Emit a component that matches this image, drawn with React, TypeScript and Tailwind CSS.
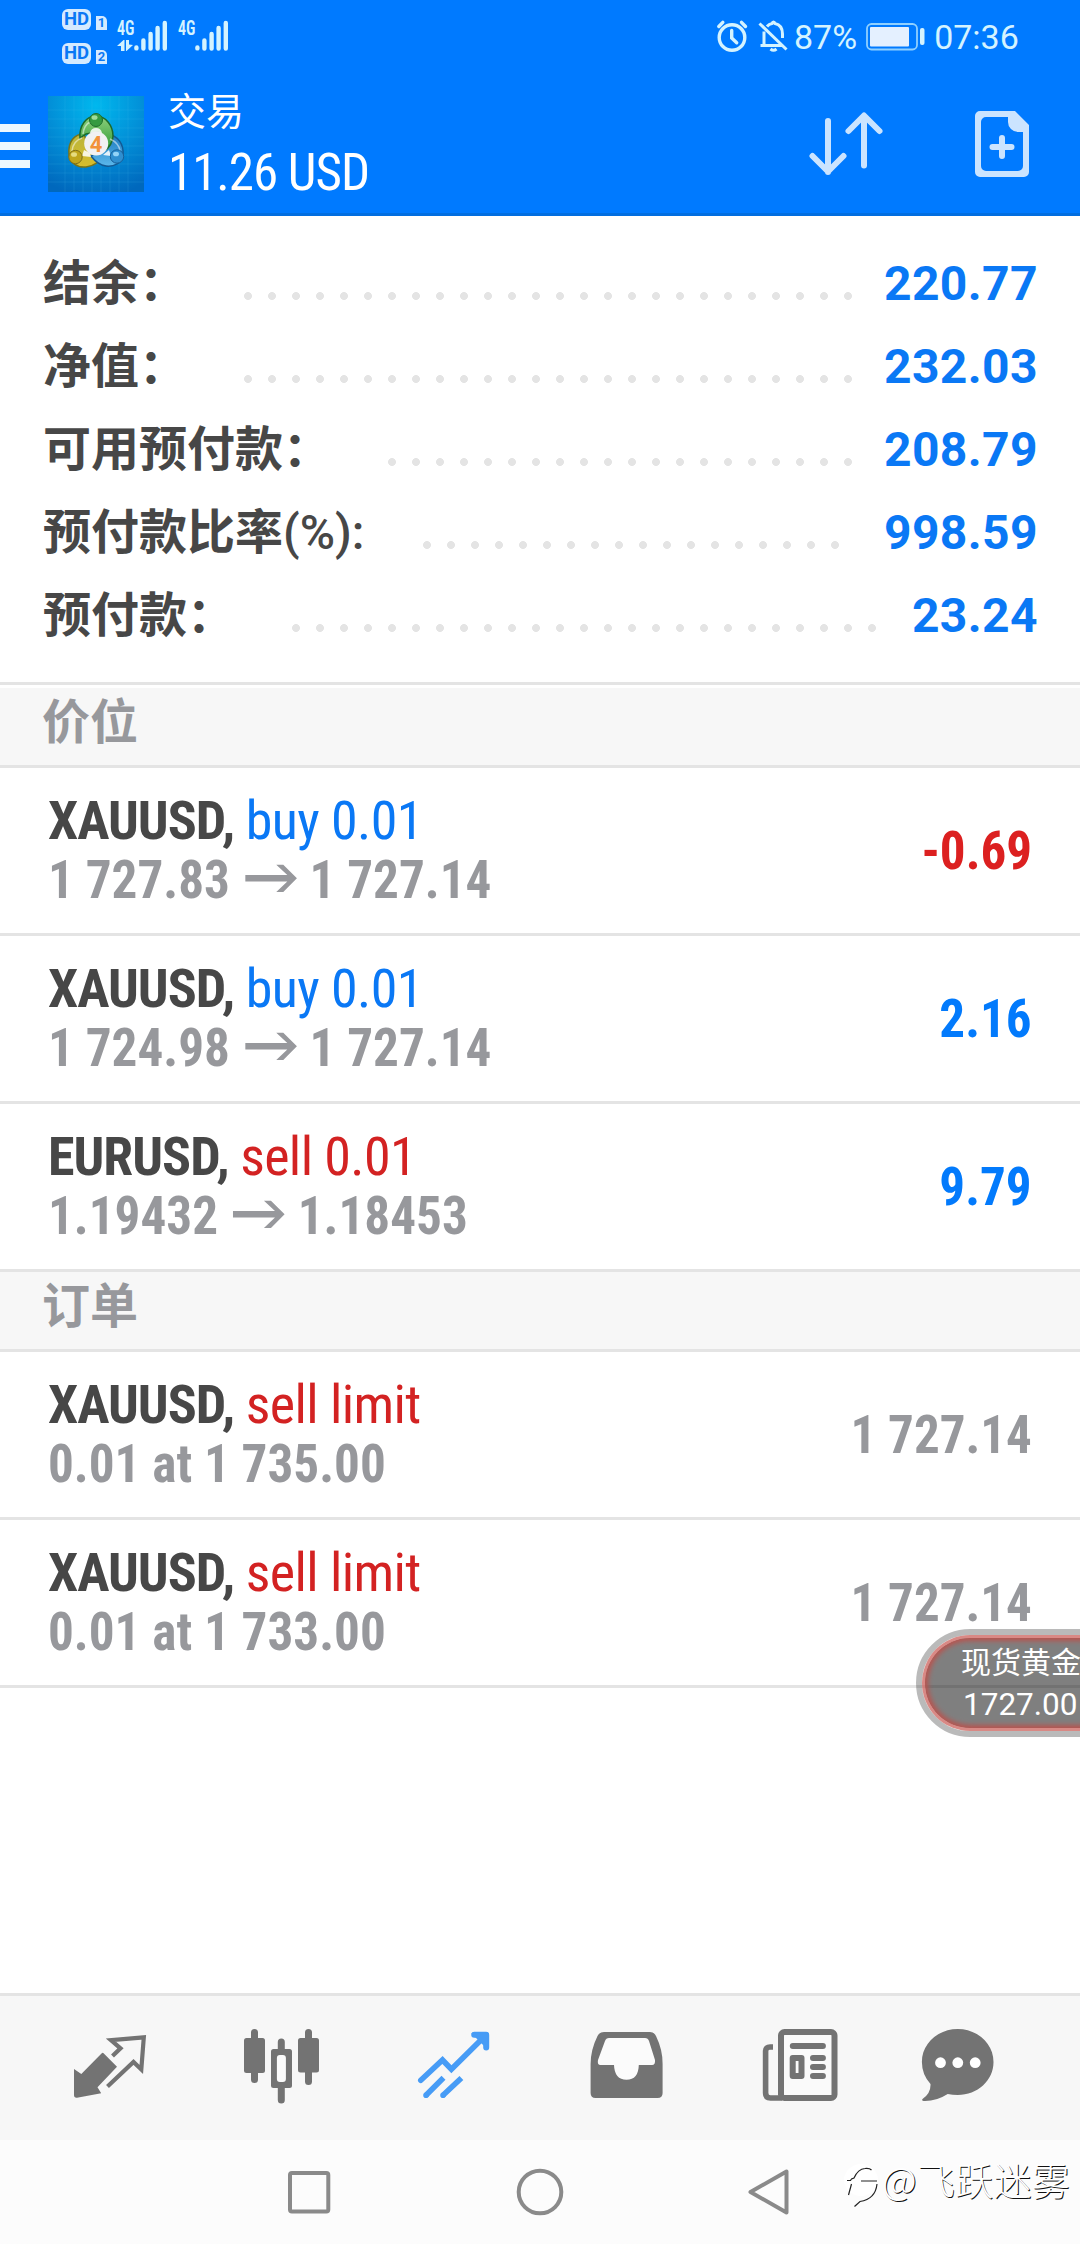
import type { ReactNode } from "react";

const summary = [
  { label: "结余：", value: "220.77", labelWidth: "w-[193px]", dots: "w-[624px]" },
  { label: "净值：", value: "232.03", labelWidth: "w-[193px]", dots: "w-[624px]" },
  { label: "可用预付款：", value: "208.79", labelWidth: "w-[337px]", dots: "w-[480px]" },
  { label: "预付款比率", suffix: "(%):", value: "998.59", labelWidth: "w-[372px]", dots: "w-[432px]" },
  { label: "预付款：", value: "23.24", labelWidth: "w-[241px]", dots: "w-[600px]" },
];

const positions = [
  { symbol: "XAUUSD,", side: "buy 0.01", sell: false, open: "1 727.83", current: "1 727.14", profit: "-0.69" },
  { symbol: "XAUUSD,", side: "buy 0.01", sell: false, open: "1 724.98", current: "1 727.14", profit: "2.16" },
  { symbol: "EURUSD,", side: "sell 0.01", sell: true, open: "1.19432", current: "1.18453", profit: "9.79" },
];

const orders = [
  { symbol: "XAUUSD,", side: "sell limit", detail: "0.01 at 1 735.00", price: "1 727.14" },
  { symbol: "XAUUSD,", side: "sell limit", detail: "0.01 at 1 733.00", price: "1 727.14" },
];

function HdBadge({ sim }: { sim: string }) {
  return (
    <div className="flex items-end gap-[5px] h-[21px]">
      <span className="w-[29px] h-[21px] rounded-[6px] bg-[#d4eaff] text-[#0a78f5] font-['Roboto'] font-bold text-[18.5px] leading-[21px] text-center">
        HD
      </span>
      <span className="w-[11px] h-[14px] rounded-tr-[5px] bg-[#d4eaff] text-[#0a78f5] font-['Roboto'] font-bold text-[13px] leading-[14px] text-center">
        {sim}
      </span>
    </div>
  );
}

function Signal({ data }: { data?: boolean }) {
  return (
    <svg width="52" height="34" viewBox="0 0 52 34" className="shrink-0 overflow-visible">
      <text
        x="-1"
        y="16.500"
        fill="#d4f3ff"
        fontSize="20"
        fontWeight="600"
        fontFamily="Roboto Condensed, sans-serif"
        textLength="17.5"
        lengthAdjust="spacingAndGlyphs"
      >
        4G
      </text>
      {data && (
        <g fill="#d4f3ff">
          <path d="M-1 28L5.500 22H6.500V33H3V28Z" />
          <path d="M8 22H11V26.500L15 27L8.500 33H8Z" />
        </g>
      )}
      <g stroke="#d4f3ff" strokeWidth="4.4" strokeLinecap="round">
        <path d="M18.400 29.400v1M25.400 22.500v8M32.600 16v14.500M39.600 10v20.500M46.800 5v25.500" />
      </g>
    </svg>
  );
}

function StatusBar() {
  return (
    <div className="h-[72px] flex items-start text-[#d4f3ff]">
      <div className="ml-[62px] pt-[9px] flex flex-col gap-[13px]">
        <HdBadge sim="1" />
        <HdBadge sim="2" />
      </div>
      <div className="ml-[11px] mt-[18px] flex gap-[9px]">
        <Signal data />
        <Signal />
      </div>
      <svg width="36" height="36" viewBox="0 0 36 36" className="ml-[483px] mt-[18px]" fill="none" stroke="#d4f3ff" strokeWidth="3.4" strokeLinecap="round">
        <circle cx="18" cy="19.5" r="12.8" />
        <path d="M17.7 12.5v7.5l5 4.8M4.8 8.5l4-4.2M27.5 4.3l4 4.2" />
      </svg>
      <svg width="34" height="36" viewBox="0 0 34 36" className="ml-[6px] mt-[18px]" fill="none" stroke="#d4f3ff" strokeWidth="3">
        <path d="M4.5 27.5h22.5M8 27V13.5M11 8.5q2-2.500 5-3q.5-1.500 1.500-1.500t1.500 1.500q7.500 1.500 7.500 10.500v4" />
        <path d="M3.500 5.500l27 26" />
        <path d="M14.500 31q3 2.500 6 0" />
      </svg>
      <span className="ml-[4px] font-['Roboto'] text-[34px] leading-[74px]">87%</span>
      <svg width="62" height="32" viewBox="0 0 62 32" className="ml-[7px] mt-[20px]">
        <rect x="3" y="4" width="50" height="25.500" rx="4.500" fill="none" stroke="#8fd0ff" strokeWidth="1.800" />
        <rect x="6" y="7" width="39" height="19.500" rx="1" fill="#e4f0ff" />
        <rect x="56" y="8" width="4.500" height="17" rx="2" fill="#d4f3ff" />
      </svg>
      <span className="ml-[8px] font-['Roboto'] text-[34px] leading-[74px]">07:36</span>
    </div>
  );
}

function AppLogo() {
  return (
    <svg width="96" height="96" viewBox="0 0 96 96" className="ml-[18px] mt-[24px] shrink-0">
      <defs>
        <radialGradient id="sky" cx="0.5" cy="0.1" r="0.95">
          <stop offset="0" stopColor="#00b8ee" />
          <stop offset="0.5" stopColor="#0290d8" />
          <stop offset="1" stopColor="#0068bd" />
        </radialGradient>
        <linearGradient id="green" x1="0" y1="0" x2="0" y2="1">
          <stop offset="0" stopColor="#8fd07c" />
          <stop offset="1" stopColor="#2d9a37" />
        </linearGradient>
        <linearGradient id="yellow" x1="0" y1="0" x2="0" y2="1">
          <stop offset="0" stopColor="#b9b53c" />
          <stop offset="1" stopColor="#d8bd2c" />
        </linearGradient>
        <linearGradient id="blue" x1="0" y1="0" x2="0" y2="1">
          <stop offset="0" stopColor="#1a78bd" />
          <stop offset="1" stopColor="#5cb8ec" />
        </linearGradient>
      </defs>
      <rect width="96" height="96" fill="url(#sky)" />
      <path
        d="M17 0v96M26 0v96M35 0v96M44 0v96M53 0v96M62 0v96M71 0v96M80 0v96M0 14h96M0 23h96M0 32h96M0 41h96M0 50h96M0 59h96M0 68h96M0 77h96M0 86h96"
        stroke="#5cc8f5"
        strokeOpacity="0.14"
      />
      <path d="M36 38C26 38 20 46 21 58C21 66 29 72 38 71C46 70 52 66 52 60L40 50Z" fill="url(#yellow)" stroke="#77741a" strokeWidth="1.500" />
      <path d="M60 38C70 40 76 48 75 59C74 67 66 71 58 70C51 69 46 64 43 60L56 52Z" fill="url(#blue)" stroke="#135a94" strokeWidth="1.500" />
      <path d="M32 42C31 30 38 20 48 20C58 20 65 30 65 40C65 46 61 52 57 54L50 36L38 38Z" fill="url(#green)" stroke="#1d6a2a" strokeWidth="1.500" />
      <path d="M35 38Q36 29 42 26M24 55Q25 45 34 42M62 43Q71 47 72 55" fill="none" stroke="#ffffff" strokeOpacity="0.5" strokeWidth="1.500" />
      <path d="M42 37q1-5 6-5t6 5zM34 60l2-6 6 3 1 4zM55 59l6-5 2 6z" fill="#fff" fillOpacity="0.85" />
      <circle cx="48" cy="24" r="6.500" fill="#359a41" stroke="#1f6d2c" strokeWidth="1" />
      <ellipse cx="46.500" cy="21.500" rx="3" ry="2.300" fill="#9fdc9a" />
      <circle cx="27.500" cy="61" r="6.700" fill="#bfa51c" stroke="#80701a" strokeWidth="1" />
      <ellipse cx="26" cy="58.500" rx="3" ry="2.300" fill="#e6dc80" />
      <circle cx="69" cy="60.500" r="6.700" fill="#2f8fd0" stroke="#175f99" strokeWidth="1" />
      <ellipse cx="68" cy="58" rx="3" ry="2.300" fill="#94d3f7" />
      <circle cx="48.200" cy="47.500" r="12" fill="#f1f1f3" />
      <text x="48" y="55.500" textAnchor="middle" fontSize="22" fontWeight="700" fontFamily="Roboto, sans-serif" fill="#f2923a">
        4
      </text>
    </svg>
  );
}

function AppBar() {
  return (
    <div className="h-[144px] flex items-start border-b-[3px] border-[#026ee0]">
      <div className="w-[30px] mt-[52px] flex flex-col gap-[10px]">
        <div className="h-[8px] bg-[#edf8ff]" />
        <div className="h-[8px] bg-[#edf8ff]" />
        <div className="h-[8px] bg-[#edf8ff]" />
      </div>
      <AppLogo />
      <div className="ml-[24px] pt-[13px] flex-1 text-white">
        <div className="font-['Noto_Sans_CJK_SC'] text-[38px] leading-[48px]">交易</div>
        <div className="mt-[12px] font-['Roboto_Condensed'] text-[51px] leading-[56px] tracking-[-1px] whitespace-nowrap">
          11.26 USD
        </div>
      </div>
      <svg width="76" height="64" viewBox="0 0 76 64" className="mt-[39px]" fill="none" stroke="#cbe4ff" strokeWidth="6" strokeLinecap="round" strokeLinejoin="round">
        <path d="M20 10v51M4.500 45L20 60.500L35.500 45" />
        <path d="M56 54.500V5M40.500 20L56 4.500L71.500 20" />
      </svg>
      <svg width="56" height="68" viewBox="0 0 56 68" className="ml-[90px] mr-[50px] mt-[38px]">
        <path
          d="M5.500 1H41L55 15V62a5 5 0 0 1-5 5H6a5 5 0 0 1-5-5V6a5 5 0 0 1 5-5zM12 7a5 5 0 0 0-5 5v44a5 5 0 0 0 5 5h32a5 5 0 0 0 5-5V22h-5a10 10 0 0 1-10-10V7z"
          fill="#cbe4ff"
          fillRule="evenodd"
        />
        <path d="M28 28v18M18.500 37h19" stroke="#cbe4ff" strokeWidth="6" strokeLinecap="round" />
      </svg>
    </div>
  );
}

function Summary() {
  return (
    <div className="h-[466px] pt-[22px] pl-[43px] pr-[42px]">
      {summary.map((row) => (
        <div key={row.label} className="h-[83px] flex items-baseline leading-[83px] text-[48px]">
          <div className={`${row.labelWidth} shrink-0 whitespace-nowrap text-[#474747]`}>
            <span className="font-['Noto_Sans_CJK_SC'] font-bold">{row.label}</span>
            {row.suffix && <span className="font-['Roboto'] font-medium">{row.suffix}</span>}
          </div>
          <div className={`${row.dots} h-[8px] mb-[3px] bg-[radial-gradient(circle,#e4e4e4_3.6px,transparent_4.3px)] bg-[length:24px_8px] bg-repeat-x`} />
          <div className="flex-1 text-right whitespace-nowrap font-['Roboto'] font-bold tracking-[0.4px] text-[#0a78f5]">{row.value}</div>
        </div>
      ))}
    </div>
  );
}

function SectionTitle({ children }: { children: ReactNode }) {
  return (
    <div className="h-[80px] pl-[42px] bg-[#f7f7f7] border-b-[3px] border-[#e4e4e4] font-['Noto_Sans_CJK_SC'] font-bold text-[48px] leading-[61px] text-[#97989c]">
      {children}
    </div>
  );
}

function PriceArrow() {
  return (
    <svg width="55" height="29" viewBox="0 0 52 29" preserveAspectRatio="none" className="inline-block ml-[16px] mr-[13px] mb-[5px] align-baseline">
      <path d="M0 11H42L31 .7H38L51.600 14.300L38 28H31L42 17.600H0Z" fill="#97989c" />
    </svg>
  );
}

function TradeRow(props: { symbol: string; side: string; sell: boolean; value: string; valueColor: string; children: ReactNode }) {
  return (
    <div className="h-[168px] px-[48px] flex items-center justify-between border-b-[3px] border-[#e4e4e4] font-['Roboto_Condensed'] text-[54px] whitespace-nowrap">
      <div className="pb-px">
        <div className="leading-[59px] tracking-[-1px] font-bold text-[#474747]">
          {props.symbol}{" "}
          <span className={`font-normal tracking-[-0.6px] ${props.sell ? "text-[#d32222]" : "text-[#0a78f5]"}`}>{props.side}</span>
        </div>
        <div className="leading-[59px] origin-left scale-x-[0.948] font-bold text-[#97989c]">{props.children}</div>
      </div>
      <div className={`origin-right scale-x-[0.945] font-bold ${props.valueColor}`}>{props.value}</div>
    </div>
  );
}

function TabBar() {
  return (
    <div className="h-[147px] pl-[68px] pt-[24px] flex gap-[88px] bg-[#f7f7f7] border-t-[3px] border-[#e4e4e4]">
      <svg width="84" height="90" viewBox="0 0 84 90" className="shrink-0">
        <path d="M35.300 33L49 46.700L29.500 67.300L33.200 73.300L9 77.700Q6 78 6 75V49L13.300 54L33.500 33.500Q34.500 32.500 35.300 33Z" fill="#737373" />
        <path d="M44.500 36L52.500 28.300L43 20.200L75.800 17.300L73.300 49.500L65.500 42L39.500 66.500" fill="none" stroke="#737373" strokeWidth="4.200" />
      </svg>
      <svg width="84" height="90" viewBox="0 0 84 90" className="shrink-0">
        <g stroke="#737373" strokeWidth="7" strokeLinecap="round">
          <path d="M14.500 12.500V59.500M41.300 22V80M68.500 12.500V61.500" />
        </g>
        <rect x="4" y="18" width="21" height="35" rx="2.500" fill="#737373" />
        <rect x="31" y="29" width="21" height="39" rx="2.500" fill="#737373" />
        <rect x="36.900" y="35" width="9" height="27" rx="3" fill="#fafafa" />
        <rect x="58" y="18" width="21" height="34.500" rx="2.500" fill="#737373" />
      </svg>
      <svg width="84" height="90" viewBox="0 0 84 90" className="shrink-0" fill="none" stroke="#479cf6" strokeWidth="5.600">
        <path d="M8.800 60.300L30.500 40L39.400 49.300L74 15" strokeLinecap="round" />
        <path d="M62.200 14.700H74.200V27.500" strokeWidth="6" strokeLinecap="round" strokeLinejoin="round" />
        <path d="M66 16H73V23Z" />
        <path d="M14 75.300L31.500 57.700M31 75.300L49.400 58" />
        <path d="M14 75.300h.1M31 75.300h.1" strokeLinecap="round" />
      </svg>
      <svg width="84" height="90" viewBox="0 0 84 90" className="shrink-0">
        <path
          d="M20 12H66Q70 12 72 16Q78.800 30 78.600 44V73Q78.600 78 73.600 78H11.600Q6.600 78 6.600 73V44Q6.600 30 13.500 16Q15.500 12 20 12Z"
          fill="#737373"
        />
        <path
          d="M25 18H61Q64 18 65 21L71 40Q71.500 45 68 45H54.800Q54.500 59.700 42.500 59.700Q30.500 59.700 30 45H16.500Q13 45 14 40L21 21Q22 18 25 18Z"
          fill="#fbfbfb"
        />
      </svg>
      <svg width="84" height="90" viewBox="0 0 84 90" className="shrink-0" fill="none" stroke="#737373" strokeWidth="6">
        <path d="M17 27H14Q9.600 27 9.600 31V73Q9.600 78 14.500 78H26" strokeWidth="5.600" />
        <rect x="25" y="12" width="53.500" height="66" rx="3.500" fill="#fafafa" />
        <path d="M36.800 26H66.900M57 38H66.900M57 47H66.900M57 56H66.900" strokeLinecap="round" />
        <rect x="36.700" y="38" width="8.800" height="18" strokeLinejoin="round" />
      </svg>
      <svg width="84" height="90" viewBox="0 0 84 90" className="shrink-0 -ml-[7px]">
        <path
          d="M36.700 9C56.500 9 72.500 23.500 72.500 42S56.500 75 36.700 75Q31.500 75 26.700 74Q15 81.500 2.500 81Q0 80.500 1.800 78.800Q10 73 9.500 64Q.9 54.500.9 42C.9 23.500 16.900 9 36.700 9Z"
          fill="#737373"
        />
        <g fill="#fff">
          <circle cx="19.500" cy="42.700" r="5.400" />
          <circle cx="36.800" cy="42.700" r="5.400" />
          <circle cx="54.200" cy="42.700" r="5.400" />
        </g>
      </svg>
    </div>
  );
}

function SystemNav() {
  return (
    <div className="h-[104px] pl-[286px] flex items-center bg-[#fcfcfc]">
      <svg width="48" height="48" viewBox="0 0 48 48" className="shrink-0" fill="none" stroke="#8a8a8a" strokeWidth="4">
        <rect x="4" y="5" width="38.300" height="38.500" rx="2" />
      </svg>
      <svg width="48" height="48" viewBox="0 0 48 48" className="shrink-0 ml-[182px]" fill="none" stroke="#8a8a8a" strokeWidth="4">
        <circle cx="24" cy="24" r="21.300" />
      </svg>
      <svg width="48" height="48" viewBox="0 0 48 48" className="shrink-0 ml-[181px]" fill="none" stroke="#8a8a8a" strokeWidth="4" strokeLinejoin="round">
        <path d="M41.500 3.500V44.500L5.500 24Z" />
      </svg>
      <div className="ml-[50px] flex items-center pb-[26px]">
        <svg width="38" height="44" viewBox="0 0 38 44" className="shrink-0 overflow-visible">
          <ellipse cx="18" cy="23" rx="17" ry="16" fill="#fff" />
          <path
            d="M4 23.500H7.500L8.500 22L11 21Q15 12 22 11.500Q26.500 11 28.500 13M8.500 27L5.500 38M18 24H34M34 27Q32.500 42 17 44.500L11.500 49.500"
            fill="none"
            stroke="#222"
            strokeWidth="1.200"
          />
        </svg>
        <span className="ml-px font-['Noto_Sans_CJK_SC'] font-light text-[38px] tracking-[0.3px] leading-[48px] text-white whitespace-nowrap [text-shadow:0.9px_0.9px_0.3px_#111]">
          @飞跃迷雾
        </span>
      </div>
    </div>
  );
}

export default function App() {
  return (
    <div className="relative w-[1080px] h-[2244px] overflow-hidden flex flex-col bg-white">
      <div className="bg-[#007aff]">
        <StatusBar />
        <AppBar />
      </div>

      <Summary />

      <div className="h-[6px] border-t-[3px] border-[#e4e4e4]" />
      <SectionTitle>价位</SectionTitle>
      {positions.map((p) => (
        <TradeRow
          key={p.open}
          symbol={p.symbol}
          side={p.side}
          sell={p.sell}
          value={p.profit}
          valueColor={p.profit.startsWith("-") ? "text-[#dc2020]" : "text-[#027afc]"}
        >
          {p.open}
          <PriceArrow />
          {p.current}
        </TradeRow>
      ))}
      <SectionTitle>订单</SectionTitle>
      {orders.map((o) => (
        <TradeRow key={o.detail} symbol={o.symbol} side={o.side} sell value={o.price} valueColor="text-[#97989c]">
          {o.detail}
        </TradeRow>
      ))}

      <div className="mt-auto">
        <TabBar />
        <SystemNav />
      </div>

      {/* Floating quote bubble, half off the right edge */}
      <div className="absolute left-[916px] top-[1629px] w-[220px] h-[108px] rounded-full border-[6px] border-black/27 bg-clip-padding">
        <div className="h-full rounded-full bg-black/50 bg-clip-padding border-[3px] border-[#c44a44]/65 shadow-[inset_0_0_5px_3px_#b9544f] pl-[36px] pt-[2px] text-white whitespace-nowrap">
          <div className="font-['Noto_Sans_CJK_SC'] text-[30px] leading-[40px]">现货黄金</div>
          <div className="pt-[3px] pl-[2px] font-['Roboto'] text-[31.5px] leading-[44px]">1727.00</div>
        </div>
      </div>
    </div>
  );
}
